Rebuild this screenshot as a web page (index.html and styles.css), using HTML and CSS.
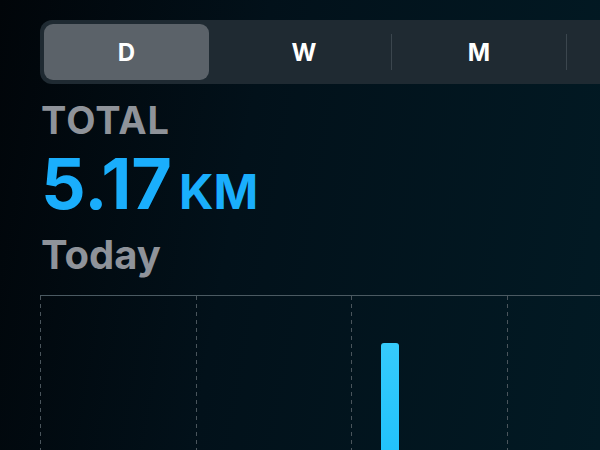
FILE: index.html
```html
<!DOCTYPE html>
<html>
  <head>
    <title>Activity Distance</title>
    <link rel="stylesheet" href="styles.css">
  </head>
  <body>
    <div class="screen">
      <div class="segmented">
        <button class="segment active">D</button>
        <span class="sep hidden"></span>
        <button class="segment">W</button>
        <span class="sep"></span>
        <button class="segment">M</button>
        <span class="sep"></span>
        <button class="segment">Y</button>
      </div>

      <div class="summary">
        <div class="label">TOTAL</div>
        <div class="value">5.17<span class="unit">KM</span></div>
        <div class="period">Today</div>
      </div>

      <div class="chart">
        <div class="col"></div>
        <div class="col"></div>
        <div class="col">
          <div class="bar" style="height: 108px"></div>
        </div>
        <div class="col"></div>
      </div>
    </div>
  </body>
</html>
```

FILE: styles.css
```css
html, body {
  margin: 0;
  height: 450px;
  overflow: hidden;
}
body {
  background: linear-gradient(100deg, #010509 0%, #02111a 40%, #021a24 100%);
  font-family: Inter, "Noto Sans", sans-serif;
  color: white;
}
.screen {
  padding: 20px 0 0 40px;
}
.segmented {
  display: flex;
  align-items: center;
  width: 760px;
  height: 64px;
  box-sizing: border-box;
  padding: 4px;
  background-color: #1f2a32;
  border-radius: 12px 0 0 12px;
}
.segment {
  width: 174px;
  height: 56px;
  border: none;
  background: none;
  color: white;
  font-family: inherit;
  font-size: 24px;
  font-weight: 700;
  padding: 0;
}
.segment.active {
  width: 165px;
  margin-right: 7px;
  background-color: #5b6269;
  border-radius: 9px;
}
.sep {
  width: 1px;
  height: 36px;
  background-color: #3b464e;
}
.sep.hidden {
  background-color: transparent;
}
.summary {
  padding-top: 14px;
  padding-left: 1px;
}
.label {
  font-size: 38px;
  font-weight: 700;
  letter-spacing: 1px;
  line-height: 44px;
  color: #8f939a;
}
.value {
  margin-top: 4px;
  font-size: 70px;
  font-weight: 700;
  line-height: 76px;
  color: #1aaefc;
}
.unit {
  font-size: 48px;
  margin-left: 7px;
}
.period {
  margin-top: 1px;
  font-size: 40px;
  font-weight: 700;
  line-height: 48px;
  color: #8f939a;
}
.chart {
  display: grid;
  grid-template-columns: repeat(4, 155.5px);
  height: 155px;
  margin-top: 16px;
  border-top: 1px solid #4b5a62;
}
.col {
  display: flex;
  align-items: flex-end;
  padding-left: 30px;
  background-image: repeating-linear-gradient(to bottom, #4a555c 0 4px, transparent 4px 8px);
  background-size: 1px 100%;
  background-repeat: no-repeat;
}
.bar {
  width: 18px;
  border-radius: 3px 3px 0 0;
  background: linear-gradient(to bottom, #36cbfb, #22c2fb);
}
```
